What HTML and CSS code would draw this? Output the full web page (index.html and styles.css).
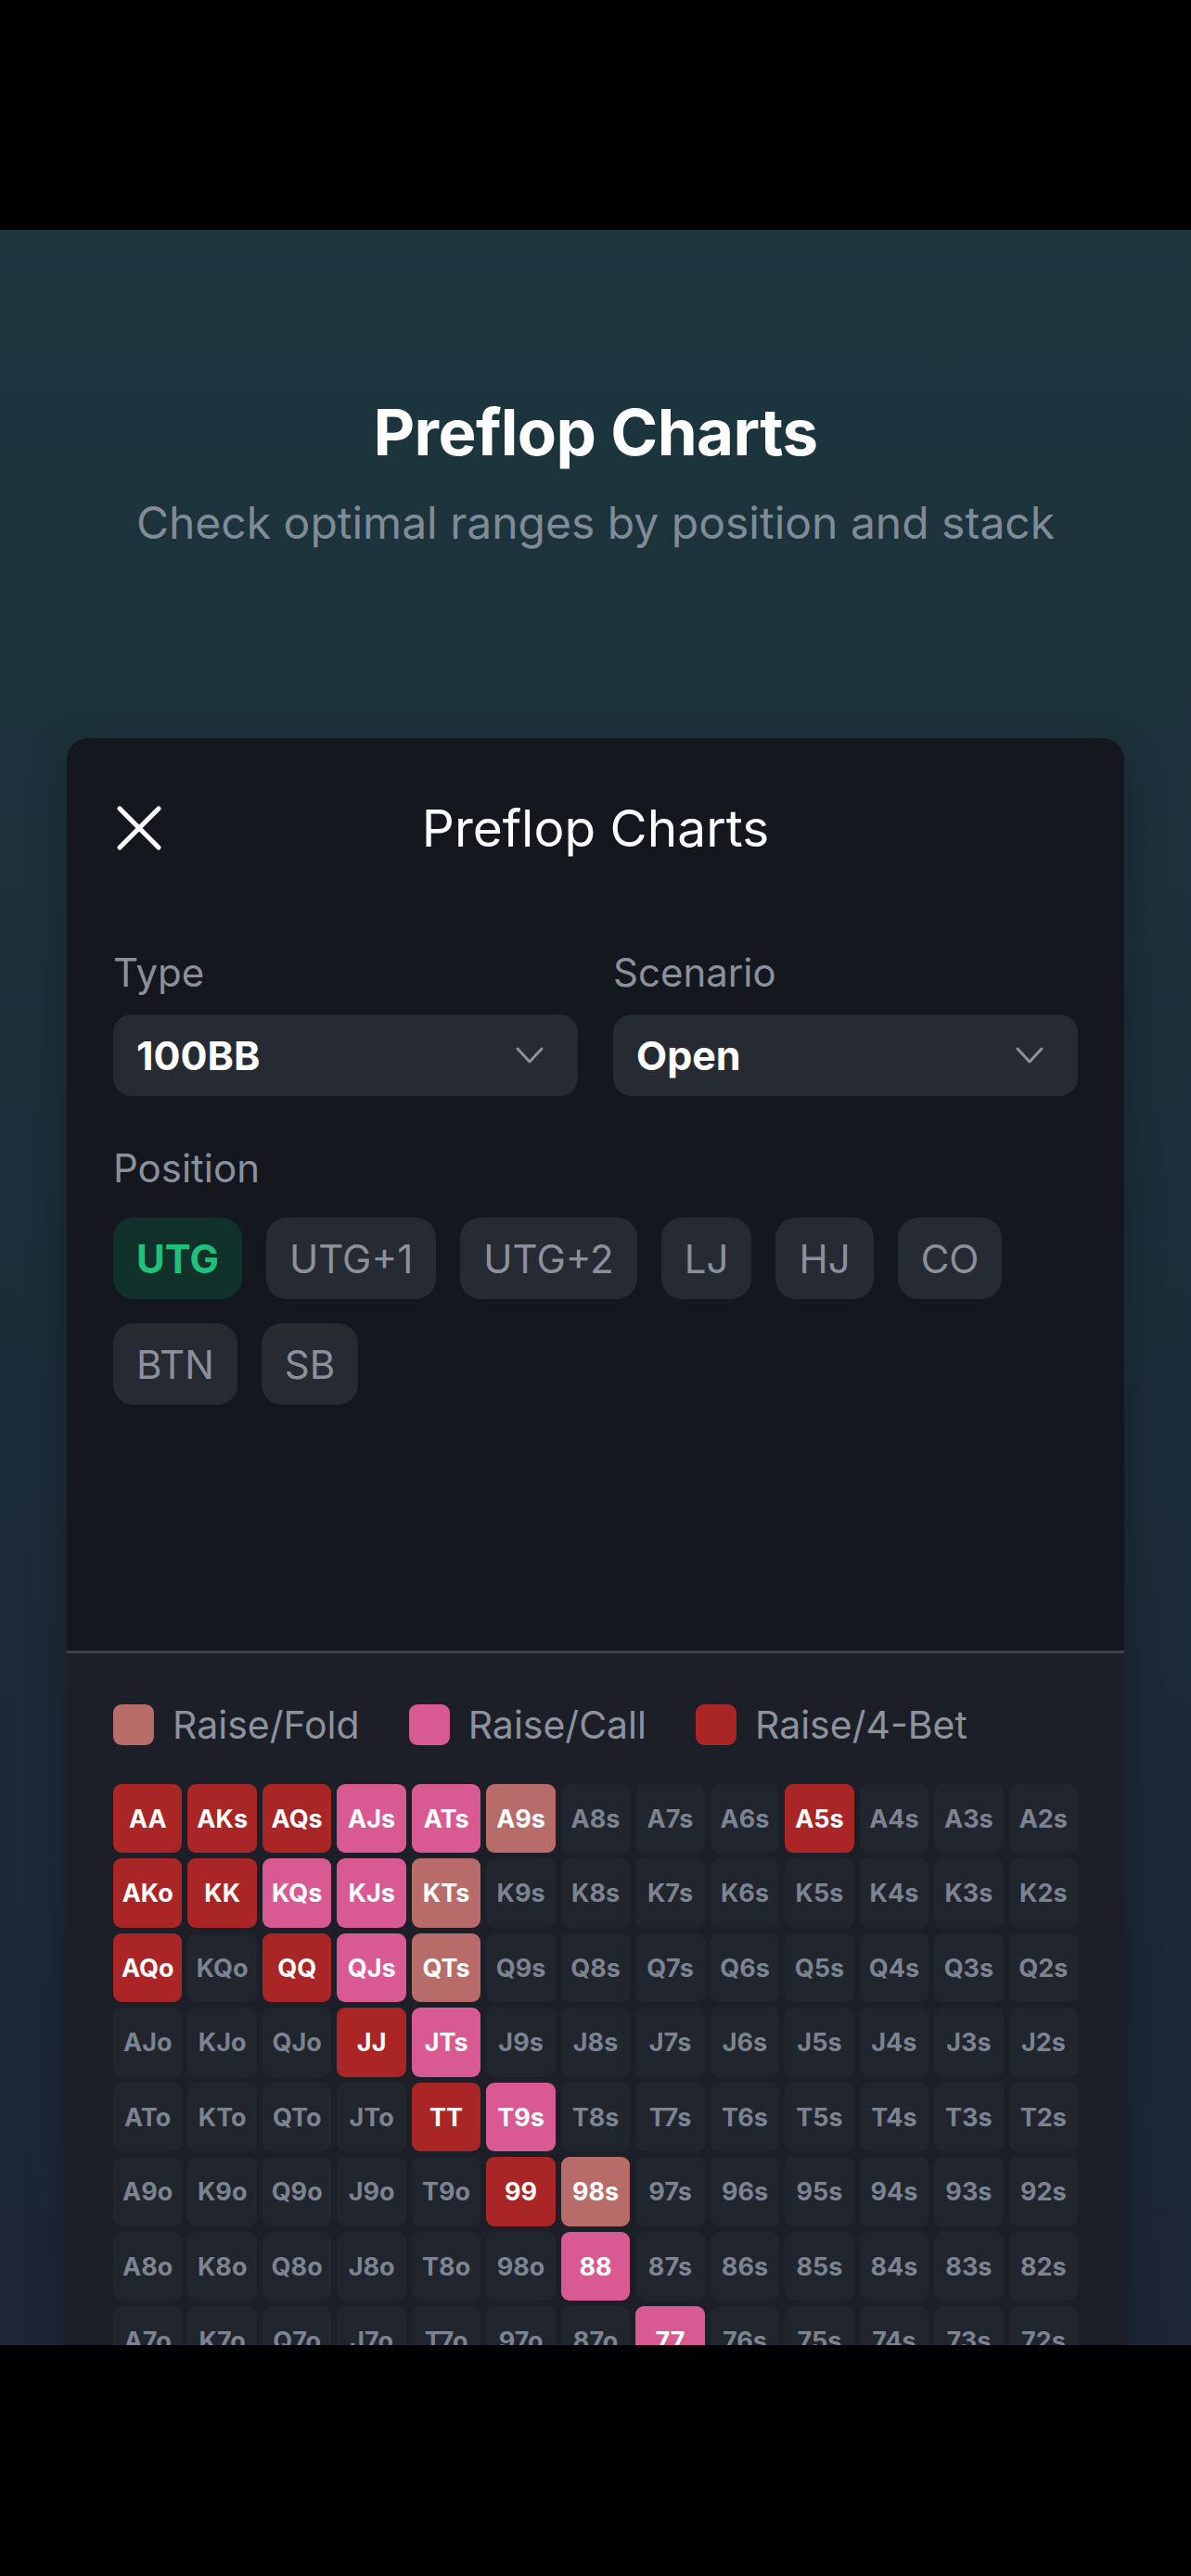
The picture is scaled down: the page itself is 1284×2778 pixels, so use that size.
FILE: index.html
```html
<!DOCTYPE html>
<html lang="en">
<head>
<meta charset="utf-8">
<title>Preflop Charts</title>
<link rel="stylesheet" href="styles.css">
</head>
<body>
<div class="device">
  <div class="bar bar-top"></div>
  <main class="screen">
    <header class="intro">
      <h1 class="intro-title">Preflop Charts</h1>
      <p class="intro-sub">Check optimal ranges by position and stack</p>
    </header>

    <section class="modal">
      <div class="modal-top">
        <div class="modal-head">
          <button class="close" aria-label="Close">
            <svg width="56" height="56" viewBox="0 0 56 56" fill="none" stroke="#ffffff" stroke-width="5.2" stroke-linecap="round"><path d="M7 7 L49 49 M49 7 L7 49"/></svg>
          </button>
          <h2 class="modal-title">Preflop Charts</h2>
          <span class="head-spacer"></span>
        </div>

        <div class="selects">
          <div class="field">
            <div class="field-label">Type</div>
            <div class="select"><span class="select-value">100BB</span>
              <svg class="chev" width="30" height="18" viewBox="0 0 30 18" fill="none" stroke="#8b909c" stroke-width="3" stroke-linecap="round" stroke-linejoin="round"><path d="M2 2 L15 16 L28 2"/></svg>
            </div>
          </div>
          <div class="field">
            <div class="field-label">Scenario</div>
            <div class="select"><span class="select-value">Open</span>
              <svg class="chev" width="30" height="18" viewBox="0 0 30 18" fill="none" stroke="#8b909c" stroke-width="3" stroke-linecap="round" stroke-linejoin="round"><path d="M2 2 L15 16 L28 2"/></svg>
            </div>
          </div>
        </div>

        <div class="field position">
          <div class="field-label">Position</div>
          <div class="chips">
            <span class="chip chip-active">UTG</span>
            <span class="chip">UTG+1</span>
            <span class="chip">UTG+2</span>
            <span class="chip">LJ</span>
            <span class="chip">HJ</span>
            <span class="chip">CO</span>
            <span class="chip">BTN</span>
            <span class="chip">SB</span>
          </div>
        </div>
      </div>

      <div class="modal-chart">
        <div class="legend">
          <div class="legend-item"><span class="swatch rf"></span>Raise/Fold</div>
          <div class="legend-item"><span class="swatch rc"></span>Raise/Call</div>
          <div class="legend-item"><span class="swatch rb"></span>Raise/4-Bet</div>
        </div>

        <div class="grid">
          <span class="c rb">AA</span><span class="c rb">AKs</span><span class="c rb">AQs</span><span class="c rc">AJs</span><span class="c rc">ATs</span><span class="c rf">A9s</span><span class="c">A8s</span><span class="c">A7s</span><span class="c">A6s</span><span class="c rb">A5s</span><span class="c">A4s</span><span class="c">A3s</span><span class="c">A2s</span>
          <span class="c rb">AKo</span><span class="c rb">KK</span><span class="c rc">KQs</span><span class="c rc">KJs</span><span class="c rf">KTs</span><span class="c">K9s</span><span class="c">K8s</span><span class="c">K7s</span><span class="c">K6s</span><span class="c">K5s</span><span class="c">K4s</span><span class="c">K3s</span><span class="c">K2s</span>
          <span class="c rb">AQo</span><span class="c">KQo</span><span class="c rb">QQ</span><span class="c rc">QJs</span><span class="c rf">QTs</span><span class="c">Q9s</span><span class="c">Q8s</span><span class="c">Q7s</span><span class="c">Q6s</span><span class="c">Q5s</span><span class="c">Q4s</span><span class="c">Q3s</span><span class="c">Q2s</span>
          <span class="c">AJo</span><span class="c">KJo</span><span class="c">QJo</span><span class="c rb">JJ</span><span class="c rc">JTs</span><span class="c">J9s</span><span class="c">J8s</span><span class="c">J7s</span><span class="c">J6s</span><span class="c">J5s</span><span class="c">J4s</span><span class="c">J3s</span><span class="c">J2s</span>
          <span class="c">ATo</span><span class="c">KTo</span><span class="c">QTo</span><span class="c">JTo</span><span class="c rb">TT</span><span class="c rc">T9s</span><span class="c">T8s</span><span class="c">T7s</span><span class="c">T6s</span><span class="c">T5s</span><span class="c">T4s</span><span class="c">T3s</span><span class="c">T2s</span>
          <span class="c">A9o</span><span class="c">K9o</span><span class="c">Q9o</span><span class="c">J9o</span><span class="c">T9o</span><span class="c rb">99</span><span class="c rf">98s</span><span class="c">97s</span><span class="c">96s</span><span class="c">95s</span><span class="c">94s</span><span class="c">93s</span><span class="c">92s</span>
          <span class="c">A8o</span><span class="c">K8o</span><span class="c">Q8o</span><span class="c">J8o</span><span class="c">T8o</span><span class="c">98o</span><span class="c rc">88</span><span class="c">87s</span><span class="c">86s</span><span class="c">85s</span><span class="c">84s</span><span class="c">83s</span><span class="c">82s</span>
          <span class="c">A7o</span><span class="c">K7o</span><span class="c">Q7o</span><span class="c">J7o</span><span class="c">T7o</span><span class="c">97o</span><span class="c">87o</span><span class="c rc">77</span><span class="c">76s</span><span class="c">75s</span><span class="c">74s</span><span class="c">73s</span><span class="c">72s</span>
          <span class="c">A6o</span><span class="c">K6o</span><span class="c">Q6o</span><span class="c">J6o</span><span class="c">T6o</span><span class="c">96o</span><span class="c">86o</span><span class="c">76o</span><span class="c rc">66</span><span class="c">65s</span><span class="c">64s</span><span class="c">63s</span><span class="c">62s</span>
          <span class="c">A5o</span><span class="c">K5o</span><span class="c">Q5o</span><span class="c">J5o</span><span class="c">T5o</span><span class="c">95o</span><span class="c">85o</span><span class="c">75o</span><span class="c">65o</span><span class="c rf">55</span><span class="c">54s</span><span class="c">53s</span><span class="c">52s</span>
          <span class="c">A4o</span><span class="c">K4o</span><span class="c">Q4o</span><span class="c">J4o</span><span class="c">T4o</span><span class="c">94o</span><span class="c">84o</span><span class="c">74o</span><span class="c">64o</span><span class="c">54o</span><span class="c">44</span><span class="c">43s</span><span class="c">42s</span>
          <span class="c">A3o</span><span class="c">K3o</span><span class="c">Q3o</span><span class="c">J3o</span><span class="c">T3o</span><span class="c">93o</span><span class="c">83o</span><span class="c">73o</span><span class="c">63o</span><span class="c">53o</span><span class="c">43o</span><span class="c">33</span><span class="c">32s</span>
          <span class="c">A2o</span><span class="c">K2o</span><span class="c">Q2o</span><span class="c">J2o</span><span class="c">T2o</span><span class="c">92o</span><span class="c">82o</span><span class="c">72o</span><span class="c">62o</span><span class="c">52o</span><span class="c">42o</span><span class="c">32o</span><span class="c">22</span>
        </div>
      </div>
    </section>
  </main>
  <div class="bar bar-bottom"></div>
</div>
</body>
</html>
```

FILE: styles.css
```css
* { box-sizing: border-box; }

html, body {
  margin: 0;
  padding: 0;
  background: #000000;
}

body {
  font-family: Inter, "Noto Sans", "Liberation Sans", sans-serif;
  color: #ffffff;
}

.device {
  width: 1284px;
  height: 2778px;
  display: flex;
  flex-direction: column;
  overflow: hidden;
}

.bar { background: #000000; flex: none; }
.bar-top { height: 248px; }
.bar-bottom { flex: 1; }

.screen {
  height: 2281px;
  flex: none;
  overflow: hidden;
  background: linear-gradient(180deg, #1d363e 0%, #1c303a 35%, #1c2a37 70%, #1c2636 100%);
  padding: 0 72px;
}

.intro {
  text-align: center;
  padding-top: 183px;
}

.intro-title {
  margin: 0;
  font-size: 69px;
  line-height: 70px;
  font-weight: 700;
  letter-spacing: -0.6px;
  color: #ffffff;
}

.intro-sub {
  margin: 35px 0 0;
  font-size: 48px;
  line-height: 56px;
  font-weight: 400;
  color: #808b98;
}

.modal {
  margin-top: 204px;
  border-radius: 24px;
  overflow: hidden;
  background: #14171e;
  box-shadow: 0 10px 40px rgba(0, 0, 0, 0.25);
}

.modal-top {
  padding: 49px 50px 265px;
  background: #14171e;
}

.modal-head {
  height: 96px;
  display: grid;
  grid-template-columns: 1fr auto 1fr;
  align-items: center;
}

.close {
  justify-self: start;
  width: 56px;
  height: 56px;
  padding: 0;
  border: 0;
  background: none;
  display: flex;
}

.modal-title {
  margin: 0;
  font-size: 55px;
  line-height: 60px;
  font-weight: 400;
  color: #ffffff;
}

.selects {
  margin-top: 83px;
  display: grid;
  grid-template-columns: 1fr 1fr;
  column-gap: 38px;
}

.field-label {
  font-size: 42px;
  line-height: 50px;
  color: #8b909c;
}

.select {
  margin-top: 20px;
  height: 88px;
  border-radius: 20px;
  background: #262a33;
  display: flex;
  align-items: center;
  justify-content: space-between;
  padding: 0 37px 0 25px;
}

.select-value {
  font-size: 43px;
  font-weight: 700;
  color: #ffffff;
}

.position { margin-top: 53px; }

.chips {
  margin-top: 28px;
  display: flex;
  flex-wrap: wrap;
  gap: 26px 26px;
  width: 980px;
}

.chip {
  height: 88px;
  padding: 0 25px;
  border-radius: 22px;
  background: #262a33;
  color: #8b909c;
  font-size: 42px;
  display: flex;
  align-items: center;
}

.chip-active {
  background: #11312b;
  color: #21c07f;
  font-weight: 700;
}

.modal-chart {
  border-top: 3px solid #3c424c;
  background: #1c1f28;
  padding: 52px 50px 60px;
}

.legend {
  display: flex;
  gap: 53px;
  height: 50px;
  align-items: center;
}

.legend-item {
  display: flex;
  align-items: center;
  gap: 20px;
  font-size: 41px;
  line-height: 50px;
  color: #8d929d;
}

.swatch {
  width: 44px;
  height: 44px;
  border-radius: 9px;
}

.grid {
  margin-top: 39px;
  display: grid;
  grid-template-columns: repeat(13, 1fr);
  gap: 6px;
}

.c {
  aspect-ratio: 1 / 1;
  border-radius: 9px;
  background: #21252e;
  color: #7c8391;
  font-size: 27px;
  font-weight: 700;
  display: flex;
  align-items: center;
  justify-content: center;
}

.rf { background: #b86c6a; color: #ffffff; }
.rc { background: #d95a93; color: #ffffff; }
.rb { background: #a92526; color: #ffffff; }
```
